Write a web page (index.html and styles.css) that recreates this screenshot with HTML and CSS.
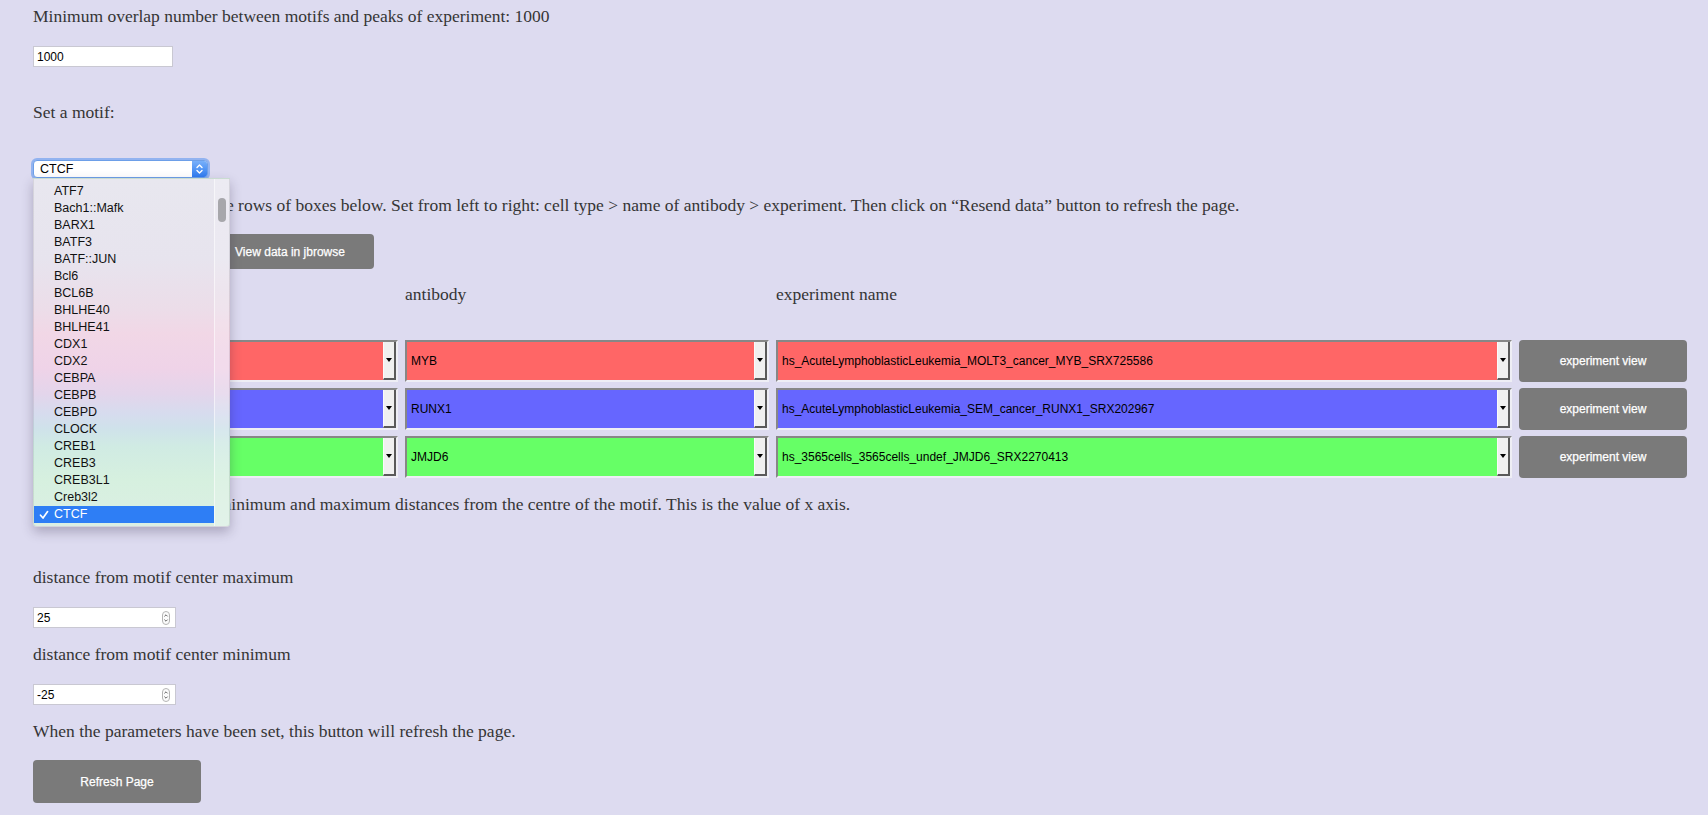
FILE: index.html
```html
<!DOCTYPE html>
<html lang="en">
<head>
<meta charset="utf-8">
<title>Motif overlap</title>
<link rel="stylesheet" href="styles.css">
</head>
<body>
<main class="page">
  <p class="txt">Minimum overlap number between motifs and peaks of experiment: 1000</p>
  <div class="field f-overlap"><input class="fin" type="text" value="1000"></div>

  <p class="txt t-motif">Set a motif:</p>
  <div class="motif-wrap">
    <div class="motif-select">
      <span class="motif-val">CTCF</span>
      <span class="motif-step">
        <svg width="9" height="12" viewBox="0 0 9 12"><path d="M2 4.5 L4.5 2 L7 4.5 M2 7.5 L4.5 10 L7 7.5" fill="none" stroke="#fff" stroke-width="1.4" stroke-linecap="round" stroke-linejoin="round"/></svg>
      </span>
    </div>
    <div class="menu">
      <ul class="menu-list">
        <li class="mi"><span class="chk"></span>ATF7</li>
        <li class="mi"><span class="chk"></span>Bach1::Mafk</li>
        <li class="mi"><span class="chk"></span>BARX1</li>
        <li class="mi"><span class="chk"></span>BATF3</li>
        <li class="mi"><span class="chk"></span>BATF::JUN</li>
        <li class="mi"><span class="chk"></span>Bcl6</li>
        <li class="mi"><span class="chk"></span>BCL6B</li>
        <li class="mi"><span class="chk"></span>BHLHE40</li>
        <li class="mi"><span class="chk"></span>BHLHE41</li>
        <li class="mi"><span class="chk"></span>CDX1</li>
        <li class="mi"><span class="chk"></span>CDX2</li>
        <li class="mi"><span class="chk"></span>CEBPA</li>
        <li class="mi"><span class="chk"></span>CEBPB</li>
        <li class="mi"><span class="chk"></span>CEBPD</li>
        <li class="mi"><span class="chk"></span>CLOCK</li>
        <li class="mi"><span class="chk"></span>CREB1</li>
        <li class="mi"><span class="chk"></span>CREB3</li>
        <li class="mi"><span class="chk"></span>CREB3L1</li>
        <li class="mi"><span class="chk"></span>Creb3l2</li>
        <li class="mi sel-item"><span class="chk"><svg width="10" height="10" viewBox="0 0 10 10"><path d="M1.5 5.2 L4 8 L8.6 1.6" fill="none" stroke="#fff" stroke-width="1.7" stroke-linecap="round" stroke-linejoin="round"/></svg></span>CTCF</li>
      </ul>
      <div class="menu-track"><div class="menu-thumb"></div></div>
    </div>
  </div>

  <p class="txt t-rows">Select experiments using the rows of boxes below. Set from left to right: cell type &gt; name of antibody &gt; experiment. Then click on “Resend data” button to refresh the page.</p>
  <div class="btns">
    <button class="btn btn-top" aria-label="Resend data"></button>
    <button class="btn btn-top">View data in jbrowse</button>
  </div>

  <div class="cols heads">
    <span class="txt" aria-label="cell type"></span>
    <span class="txt">antibody</span>
    <span class="txt">experiment name</span>
    <span></span>
  </div>

  <div class="cols rows">
    <div class="sel red"><span class="val"></span><span class="arr"></span></div>
    <div class="sel red"><span class="val">MYB</span><span class="arr"></span></div>
    <div class="sel red"><span class="val">hs_AcuteLymphoblasticLeukemia_MOLT3_cancer_MYB_SRX725586</span><span class="arr"></span></div>
    <button class="btn btn-ev">experiment view</button>

    <div class="sel blue"><span class="val"></span><span class="arr"></span></div>
    <div class="sel blue"><span class="val">RUNX1</span><span class="arr"></span></div>
    <div class="sel blue"><span class="val">hs_AcuteLymphoblasticLeukemia_SEM_cancer_RUNX1_SRX202967</span><span class="arr"></span></div>
    <button class="btn btn-ev">experiment view</button>

    <div class="sel green"><span class="val"></span><span class="arr"></span></div>
    <div class="sel green"><span class="val">JMJD6</span><span class="arr"></span></div>
    <div class="sel green"><span class="val">hs_3565cells_3565cells_undef_JMJD6_SRX2270413</span><span class="arr"></span></div>
    <button class="btn btn-ev">experiment view</button>
  </div>

  <p class="txt t-dist">Use these boxes to set the minimum and maximum distances from the centre of the motif. This is the value of x axis.</p>

  <p class="txt t-max">distance from motif center maximum</p>
  <div class="field num f-gap">
    <input class="fin" type="text" value="25">
    <svg class="spin" width="8" height="14" viewBox="0 0 8 14"><rect x="0.5" y="0.5" width="7" height="13" rx="3.5" fill="#fbfbfb" stroke="#b4b4b4"/><path d="M2.4 5.4 L4 3.8 L5.6 5.4 M2.4 8.6 L4 10.2 L5.6 8.6" fill="none" stroke="#555" stroke-width="0.9"/></svg>
  </div>

  <p class="txt t-small">distance from motif center minimum</p>
  <div class="field num f-gap">
    <input class="fin" type="text" value="-25">
    <svg class="spin" width="8" height="14" viewBox="0 0 8 14"><rect x="0.5" y="0.5" width="7" height="13" rx="3.5" fill="#fbfbfb" stroke="#b4b4b4"/><path d="M2.4 5.4 L4 3.8 L5.6 5.4 M2.4 8.6 L4 10.2 L5.6 8.6" fill="none" stroke="#555" stroke-width="0.9"/></svg>
  </div>

  <p class="txt t-small">When the parameters have been set, this button will refresh the page.</p>
  <button class="btn btn-refresh">Refresh Page</button>
</main>
</body>
</html>
```

FILE: styles.css
```css
* { box-sizing: border-box; }

html, body {
  margin: 0;
  background: #dddbf0;
}

body {
  font-family: "Liberation Serif", "Times New Roman", serif;
  color: #353535;
}

.page {
  width: 1708px;
  height: 815px;
  overflow: hidden;
  padding: 6px 0 0 33px;
  display: flex;
  flex-direction: column;
  align-items: flex-start;
}

.txt {
  margin: 0;
  font-size: 17.5px;
  line-height: 20px;
  white-space: nowrap;
}

/* text inputs */
.field {
  display: flex;
  align-items: center;
  width: 140px;
  height: 21px;
  background: #fff;
  border: 1px solid #c9c8d2;
}
.field.num { width: 143px; padding-right: 5px; }
.fin {
  flex: 1;
  min-width: 0;
  height: 100%;
  border: 0;
  outline: 0;
  background: transparent;
  padding: 0 0 0 3px;
  font: 12px "Liberation Sans", Arial, sans-serif;
  color: #000;
}
.spin { flex: none; }

.f-overlap { margin-top: 20px; }
.t-motif { margin-top: 35px; }

/* motif select */
.motif-wrap {
  position: relative;
  margin-top: 38px;
}
.motif-select {
  display: flex;
  align-items: center;
  width: 175px;
  height: 18px;
  background: #fff;
  border: 1px solid #6d9fe8;
  border-radius: 4px;
  box-shadow: 0 0 0 2px rgba(120, 165, 240, 0.75);
  font: 12.5px "Liberation Sans", Arial, sans-serif;
  color: #000;
}
.motif-val { flex: 1; padding-left: 6px; line-height: 16px; }
.motif-step {
  width: 15px;
  height: 16px;
  display: flex;
  align-items: center;
  justify-content: center;
  border-radius: 0 3px 3px 0;
  background: linear-gradient(#78b0fa, #2f7cf0);
}

.menu {
  position: absolute;
  top: 18px;
  left: 0;
  z-index: 10;
  width: 197px;
  height: 349px;
  display: flex;
  border-radius: 0 0 4px 4px;
  border: 1px solid rgba(0, 0, 0, 0.08);
  box-shadow: 0 5px 12px rgba(40, 30, 60, 0.28);
  background: linear-gradient(
    #e8e7ef 0px,
    #e7e4ee 80px,
    #ecdde9 130px,
    #f1d7e6 155px,
    #efd3e8 190px,
    #e3d5eb 215px,
    #d6dcee 235px,
    #cfe2ea 250px,
    #d0ebe3 268px,
    #d6f0df 300px,
    #dcefe4 349px
  );
}
.menu-list {
  list-style: none;
  margin: 0;
  padding: 4px 0 3px;
  flex: 1;
}
.mi {
  display: flex;
  align-items: center;
  height: 17px;
  font: 12.5px/17px "Liberation Sans", Arial, sans-serif;
  color: #111;
}
.chk {
  width: 20px;
  padding-left: 5px;
  display: flex;
  align-items: center;
}
.sel-item { background: #2e7ef5; color: #fff; }
.menu-track {
  width: 15px;
  border-left: 1px solid rgba(255, 255, 255, 0.55);
  background: rgba(255, 255, 255, 0.18);
  padding: 19px 0 0 3px;
}
.menu-thumb {
  width: 8px;
  height: 24px;
  border-radius: 4px;
  background: #a7a7ab;
}

.t-rows { margin-top: 17px; }

/* buttons */
.btn {
  border: 0;
  border-radius: 4px;
  background: #7a7a7a;
  color: #fff;
  font: 12px "Liberation Sans", Arial, sans-serif;
  -webkit-text-stroke: 0.25px #fff;
  padding: 0;
  cursor: pointer;
}
.btns {
  display: flex;
  gap: 5px;
  margin-top: 19px;
}
.btn-top { width: 168px; height: 35px; }

/* rows */
.cols {
  display: grid;
  grid-template-columns: 365px 364px 736px 168px;
  column-gap: 7px;
}
.heads { margin-top: 15px; height: 20px; }
.rows {
  margin-top: 36px;
  grid-auto-rows: 42px;
  row-gap: 6px;
}
.sel {
  display: flex;
  border-top: 2px solid #878787;
  border-left: 2px solid #878787;
  border-right: 2px solid #eeeef5;
  border-bottom: 2px solid #eeeef5;
  font: 12px "Liberation Sans", Arial, sans-serif;
  color: #000;
}
.val {
  flex: 1;
  display: flex;
  align-items: center;
  padding-left: 4px;
  white-space: nowrap;
  overflow: hidden;
}
.arr {
  width: 13px;
  display: flex;
  align-items: center;
  justify-content: center;
  background: #f0f0f0;
  border-left: 1px solid #fafafa;
  border-right: 2px solid #5a5a5a;
  border-bottom: 2px solid #5a5a5a;
}
.arr::after {
  content: "";
  border-left: 3px solid transparent;
  border-right: 3px solid transparent;
  border-top: 4px solid #000;
}
.red { background: #ff6666; }
.blue { background: #6666ff; }
.green { background: #66ff66; }
.btn-ev { height: 42px; }

.t-dist { margin-top: 16px; }
.t-max { margin-top: 53px; }
.t-small { margin-top: 16px; }
.f-gap { margin-top: 20px; }

.btn-refresh {
  width: 168px;
  height: 43px;
  margin-top: 19px;
}
```
